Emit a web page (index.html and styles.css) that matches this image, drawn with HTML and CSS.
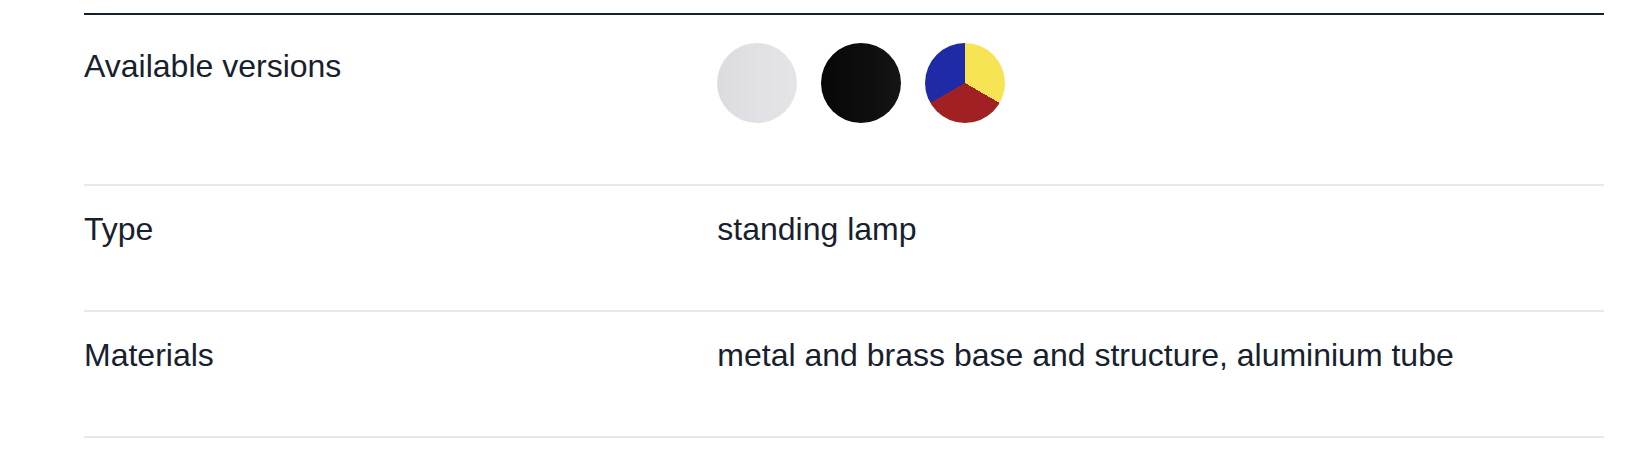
FILE: index.html
```html
<!DOCTYPE html>
<html lang="en">
<head>
<meta charset="utf-8">
<title>Specifications</title>
<link rel="stylesheet" href="styles.css">
</head>
<body>
<section class="specs">
  <div class="spec-row">
    <div class="spec-label spec-label--first">Available versions</div>
    <div class="spec-value">
      <div class="versions">
        <span class="swatch swatch--white" title="White"></span>
        <span class="swatch swatch--black" title="Black"></span>
        <span class="swatch swatch--tricolor" title="Yellow, red, blue"></span>
      </div>
    </div>
  </div>
  <div class="spec-row">
    <div class="spec-label">Type</div>
    <div class="spec-value">standing lamp</div>
  </div>
  <div class="spec-row">
    <div class="spec-label">Materials</div>
    <div class="spec-value">metal and brass base and structure, aluminium tube</div>
  </div>
</section>
</body>
</html>
```
FILE: styles.css
```css
html, body {
  margin: 0;
  padding: 0;
  background: #ffffff;
}

body {
  padding: 13px 34px 0 84px;
  font-family: "Liberation Sans", Arial, "Helvetica Neue", Helvetica, sans-serif;
  color: #17212e;
}

.specs {
  border-top: 2px solid #16202c;
}

.spec-row {
  display: grid;
  grid-template-columns: 5fr 7fr;
  padding: 20px 0 59px;
  border-bottom: 2px solid #e8e8e8;
  font-size: 32px;
  line-height: 45px;
}

.spec-row + .spec-row {
  padding-top: 21px;
  padding-bottom: 58px;
}

.spec-label--first {
  margin-top: 9px;
}

.versions {
  display: flex;
  gap: 24px;
  padding: 8px 0 2px;
}

.swatch {
  display: block;
  width: 80px;
  height: 80px;
  border-radius: 50%;
}

.swatch--white {
  background: linear-gradient(90deg, #dcdbe0 0%, #e2e2e6 60%, #e4e4e7 100%);
}

.swatch--black {
  background: linear-gradient(90deg, #070707 0%, #0e0e0e 60%, #151515 100%);
}

.swatch--tricolor {
  background: conic-gradient(#f6e455 0deg 120deg, #a02024 120deg 240deg, #1f2aa6 240deg 360deg);
}
```
